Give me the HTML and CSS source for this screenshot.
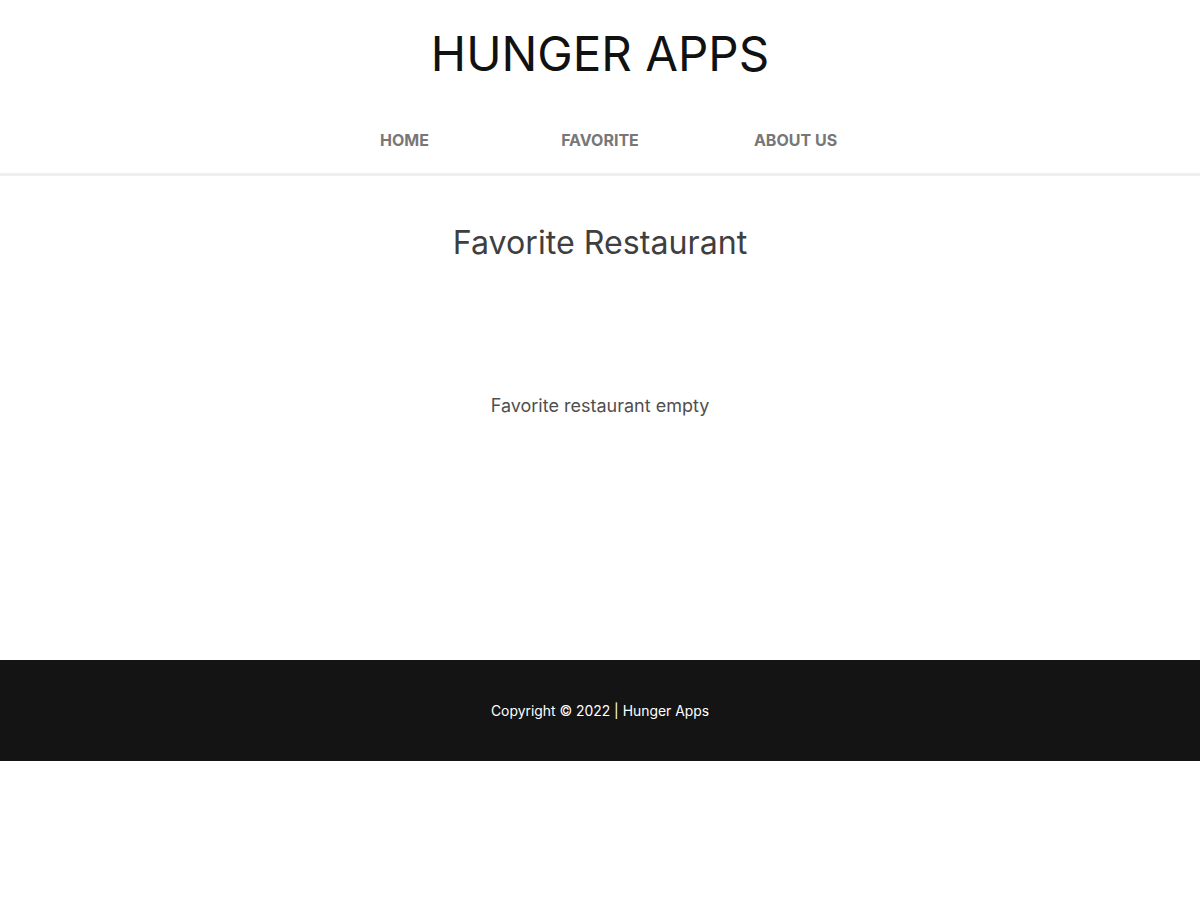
FILE: index.html
```html
<!DOCTYPE html>
<html lang="en">
<head>
<meta charset="utf-8">
<title>Hunger Apps</title>
<link rel="stylesheet" href="styles.css">
</head>
<body>
<header class="app-bar">
  <h1 class="brand">HUNGER APPS</h1>
  <nav class="nav">
    <ul class="nav-list">
      <li class="nav-item"><a href="#">HOME</a></li>
      <li class="nav-item"><a href="#">FAVORITE</a></li>
      <li class="nav-item"><a href="#">ABOUT US</a></li>
    </ul>
  </nav>
</header>
<main class="content">
  <h2 class="content-title">Favorite Restaurant</h2>
  <p class="empty">Favorite restaurant empty</p>
</main>
<footer class="footer">
  <p>Copyright © 2022 | Hunger Apps</p>
</footer>
</body>
</html>
```

FILE: styles.css
```css
* { box-sizing: border-box; }
body {
  margin: 0;
  font-family: Inter, "Noto Sans", sans-serif;
  background: #fff;
  color: #333;
}
.app-bar {
  border-bottom: 3px solid #eeeeee;
  display: flex;
  flex-direction: column;
  align-items: center;
}
.brand {
  margin: 0;
  padding-top: 24px;
  font-size: 47.5px;
  font-weight: 400;
  line-height: 60px;
  color: #111;
}
.nav-list {
  list-style: none;
  margin: 0;
  padding: 45px 0 21px;
  display: flex;
  justify-content: center;
}
.nav-item {
  width: 195.5px;
  text-align: center;
}
.nav-item a {
  text-decoration: none;
  color: #777;
  font-weight: 700;
  font-size: 16px;
  line-height: 23px;
}
.content {
  min-height: 484px;
  text-align: center;
  padding-top: 47px;
}
.content-title {
  margin: 0;
  font-size: 32.2px;
  font-weight: 400;
  line-height: 40px;
  color: #3f3f3f;
}
.empty {
  margin: 131px 0 0;
  font-size: 18px;
  line-height: 24px;
  color: #4f4f4f;
}
.footer {
  background: #141414;
  height: 101px;
  display: flex;
  align-items: center;
  justify-content: center;
}
.footer p {
  margin: 0;
  color: #fff;
  font-size: 13.9px;
  font-weight: 400;
}
```
